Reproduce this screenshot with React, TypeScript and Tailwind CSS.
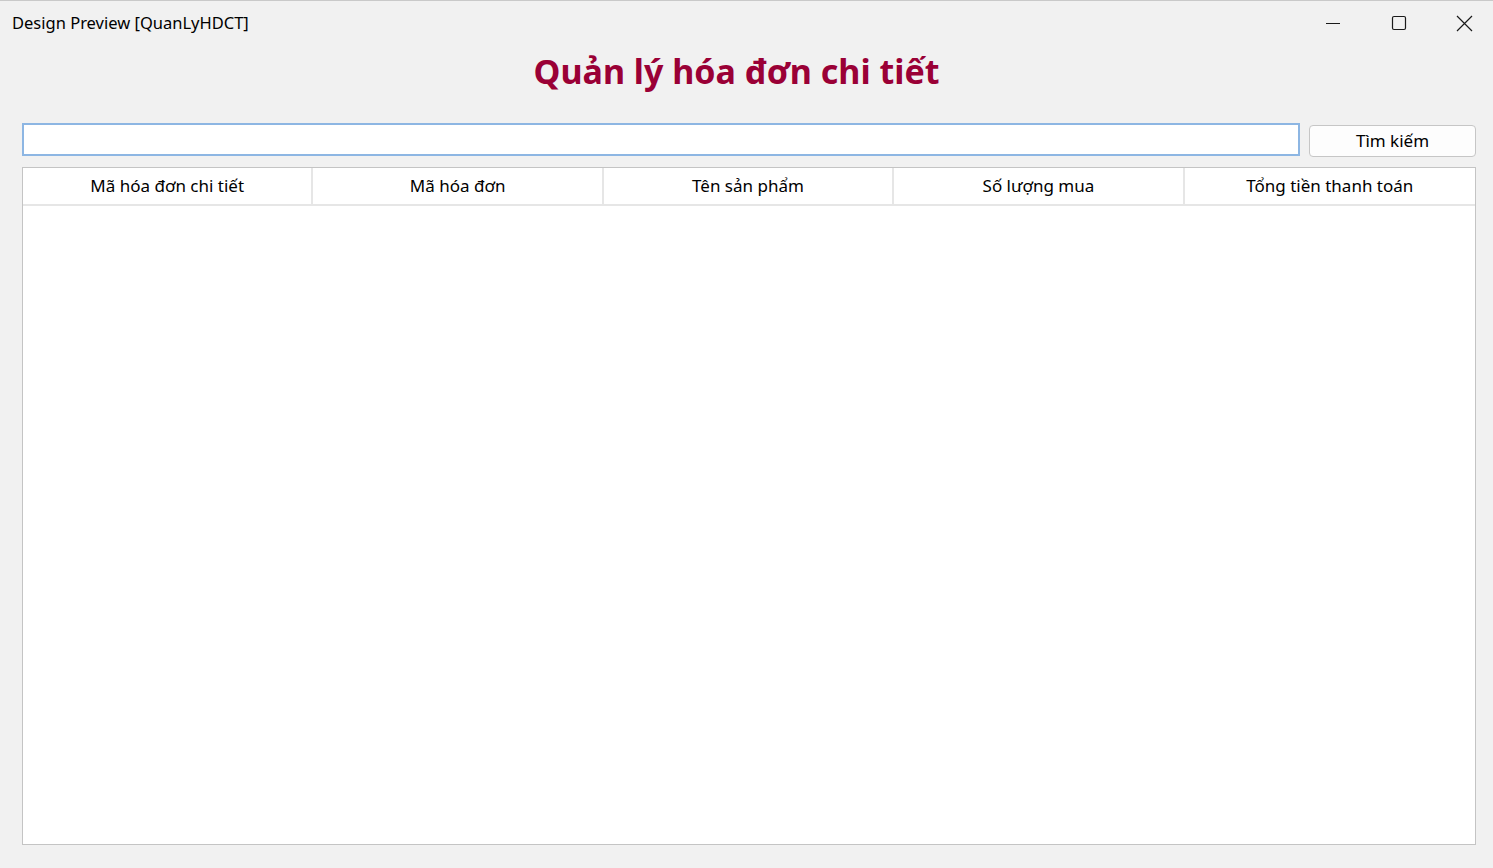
import React from "react";

const columns = ["Mã hóa đơn chi tiết", "Mã hóa đơn", "Tên sản phẩm", "Số lượng mua", "Tổng tiền thanh toán"];

const TitleBar = () => {
  return (
    <div className="flex h-[44px] items-center justify-between pl-3">
      <span className="mt-[1px] text-[16.5px] text-black">Design Preview [QuanLyHDCT]</span>
      <div className="flex h-full items-center">
        <button className="flex h-full w-[61px] items-center justify-center">
          <svg width="16" height="16" viewBox="0 0 16 16">
            <path d="M1 8.5h14" stroke="#1a1a1a" strokeWidth="1" />
          </svg>
        </button>
        <button className="flex h-full w-[72px] items-center justify-center">
          <svg width="16" height="16" viewBox="0 0 16 16">
            <rect x="1.5" y="1.5" width="13" height="13" rx="1.5" fill="none" stroke="#1a1a1a" strokeWidth="1.2" />
          </svg>
        </button>
        <button className="flex h-full w-[58px] items-center justify-center">
          <svg width="17" height="17" viewBox="0 0 17 17">
            <path d="M1 1l15 15M16 1L1 16" stroke="#1a1a1a" strokeWidth="1.2" />
          </svg>
        </button>
      </div>
    </div>
  );
};

const App = () => {
  return (
    <div
      className="flex h-[868px] w-[1493px] flex-col overflow-hidden border-t border-[#c9c9c9] bg-[#f1f1f1]"
      style={{ fontFamily: '"Noto Sans", "Open Sans", sans-serif' }}
    >
      <TitleBar />
      <h1 className="mt-[2px] pr-[20px] text-center text-[34px] leading-[48px] font-bold text-[#9a0036]">
        Quản lý hóa đơn chi tiết
      </h1>
      <div className="mt-[28px] flex items-start gap-[9px] pl-[22px] pr-[17px]">
        <input className="h-[33px] flex-1 border-2 border-[#8db6e3] bg-white outline-none" />
        <button className="mt-[2px] h-[32px] w-[167px] rounded-[4px] border border-[#c6c6c6] bg-[#fdfdfd] text-[17px] text-black">
          Tìm kiếm
        </button>
      </div>
      <div className="mx-[22px] mr-[17px] mt-[10px] mb-[23px] flex flex-1 flex-col border border-[#c4c4c4] bg-white">
        <div className="grid h-[38px] grid-cols-5 border-b-2 border-[#e6e6e6]">
          {columns.map((col, i) => (
            <div
              key={col}
              className={`flex items-center justify-center text-[17px] text-black ${
                i < columns.length - 1 ? "border-r-2 border-[#e6e6e6]" : ""
              }`}
            >
              {col}
            </div>
          ))}
        </div>
        <div className="flex-1" />
      </div>
    </div>
  );
};

export default App;
